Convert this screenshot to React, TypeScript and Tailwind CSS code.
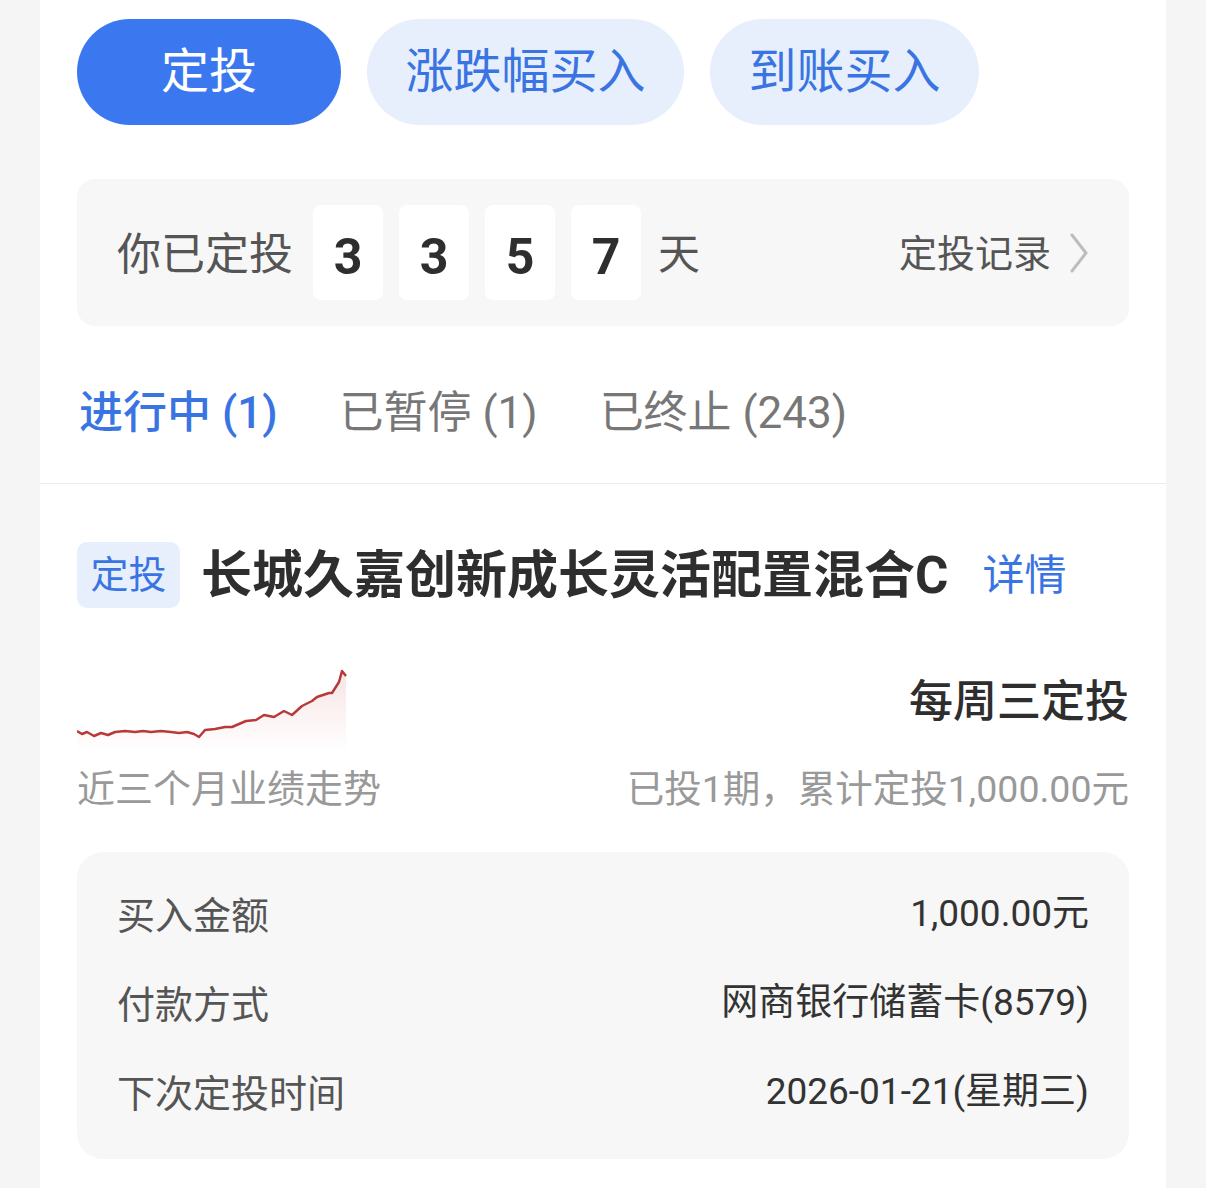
const modes = [
  { label: '定投', w: 'w-[264px]', active: true },
  { label: '涨跌幅买入', w: 'w-[317px]', active: false },
  { label: '到账买入', w: 'w-[269px]', active: false },
]

const tabs = [
  { label: '进行中', count: 1, active: true },
  { label: '已暂停', count: 1, active: false },
  { label: '已终止', count: 243, active: false },
]

const details = [
  { k: '买入金额', v: '1,000.00元' },
  { k: '付款方式', v: '网商银行储蓄卡(8579)' },
  { k: '下次定投时间', v: '2026-01-21(星期三)' },
]

// 近三个月走势，坐标直接取自截图
const pts: [number, number][] = [
  [0, 67], [5, 70], [10, 68], [17, 72], [24, 69], [31, 71], [38, 68], [48, 67],
  [58, 68], [66, 67], [74, 68], [84, 67], [94, 68], [102, 69], [110, 68], [117, 70],
  [122, 73], [128, 66], [138, 65], [148, 63], [155, 63], [162, 60], [169, 57],
  [179, 56], [187, 51], [197, 53], [207, 47], [215, 51], [225, 42], [235, 37],
  [240, 33], [246, 31], [252, 29], [255, 29], [262, 18], [265, 7], [269, 12],
]

function Trend() {
  const line = pts.map(([x, y], i) => `${i ? 'L' : 'M'}${x} ${y}`).join(' ')
  const area = `${line} L269 88 L0 88 Z`
  return (
    <svg width="272" height="90" viewBox="0 0 272 90" className="block">
      <defs>
        <linearGradient id="trendFill" x1="0" y1="0" x2="0" y2="1">
          <stop offset="0%" stopColor="#c8403f" stopOpacity="0.14" />
          <stop offset="100%" stopColor="#c8403f" stopOpacity="0" />
        </linearGradient>
      </defs>
      <path d={area} fill="url(#trendFill)" />
      <path d={line} fill="none" stroke="#b8393a" strokeWidth="2.5" strokeLinejoin="round" />
    </svg>
  )
}

function Chevron() {
  return (
    <svg width="24" height="42" viewBox="0 0 24 42" className="ml-[16px]">
      <path d="M5 3 L19 21 L5 39" fill="none" stroke="#bdbdbd" strokeWidth="3" strokeLinecap="round" strokeLinejoin="round" />
    </svg>
  )
}

export default function App() {
  return (
    <div className="min-h-[1188px] bg-[#f5f5f5] font-['Roboto','Noto_Sans_CJK_SC',sans-serif]">
      <div className="mx-10 min-h-[1188px] bg-white">
        <div className="px-[37px] pt-[19px]">
          <div className="flex gap-[26px]">
            {modes.map((m) => (
              <button
                key={m.label}
                className={`flex h-[106px] items-center justify-center rounded-full text-[48px] ${m.w} ${
                  m.active ? 'bg-[#3b78ef] text-white' : 'bg-[#e7effc] text-[#3a74e2]'
                }`}
              >
                {m.label}
              </button>
            ))}
          </div>

          <div className="mt-[54px] flex h-[147px] items-center rounded-[18px] bg-[#f7f7f7] pl-[40px] pr-[38px]">
            <span className="pt-[4px] text-[44px] text-[#555]">你已定投</span>
            <div className="ml-[20px] flex gap-[16px]">
              {['3', '3', '5', '7'].map((d, i) => (
                <span
                  key={i}
                  className="flex h-[95px] w-[70px] items-center justify-center rounded-[8px] bg-white pt-[10px] text-[50px] font-bold text-[#2e2e2e]"
                >
                  {d}
                </span>
              ))}
            </div>
            <span className="ml-[17px] pt-[4px] text-[42px] text-[#555]">天</span>
            <span className="ml-auto pt-[4px] text-[38px] text-[#555]">定投记录</span>
            <Chevron />
          </div>

          <div className="mt-[57px] flex h-[60px] items-center gap-[62px] pl-[2px]">
            {tabs.map((t) => (
              <span
                key={t.label}
                className={`text-[44px] ${t.active ? 'font-medium text-[#3a74e2]' : 'text-[#777]'}`}
              >
                {t.label} ({t.count})
              </span>
            ))}
          </div>
        </div>

        <div className="mt-[40px] h-px bg-[#ececec]" />

        <div className="px-[37px] pt-[58px]">
          <div className="flex items-center">
            <span className="flex h-[66px] w-[103px] items-center justify-center rounded-[10px] bg-[#e7effc] text-[38px] text-[#3a74e2]">
              定投
            </span>
            <span className="ml-[21px] text-[51px] font-bold leading-none text-[#2e2e2e]">
              长城久嘉创新成长灵活配置混合C
            </span>
            <span className="ml-[34px] text-[42px] text-[#3a74e2]">详情</span>
          </div>

          <div className="mt-[56px] flex items-start justify-between">
            <Trend />
            <span className="mt-[8px] text-[44px] font-medium leading-[60px] text-[#2e2e2e]">每周三定投</span>
          </div>

          <div className="mt-[7px] flex items-center justify-between text-[38px] text-[#999]">
            <span>近三个月业绩走势</span>
            <span className="text-[37.5px]">已投1期，累计定投1,000.00元</span>
          </div>

          <div className="mt-[34px] flex flex-col gap-[33px] rounded-[26px] bg-[#f7f7f7] px-[40px] pb-[37px] pt-[36px]">
            {details.map((d) => (
              <div key={d.k} className="flex h-[56px] items-center justify-between">
                <span className="text-[38px] text-[#555]">{d.k}</span>
                <span className="-mt-[4px] text-[37px] text-[#333]">{d.v}</span>
              </div>
            ))}
          </div>
        </div>
      </div>
    </div>
  )
}
